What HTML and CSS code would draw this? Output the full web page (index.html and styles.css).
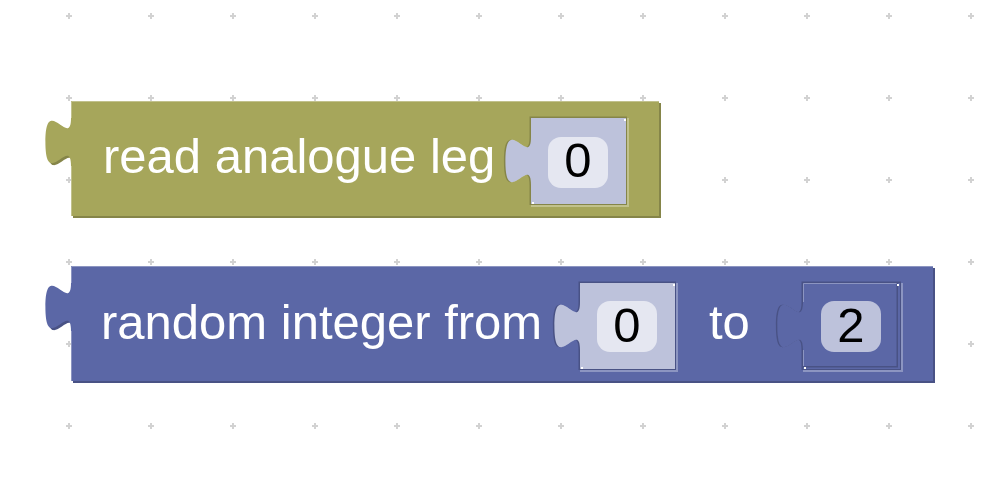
FILE: index.html
```html
<!DOCTYPE html>
<html lang="en">
<head>
<meta charset="utf-8">
<title>Blockly workspace</title>
<link rel="stylesheet" href="styles.css">
</head>
<body>
<div class="workspace">
  <svg class="canvas" width="1000" height="502" viewBox="0 0 1000 502" xmlns="http://www.w3.org/2000/svg">
    <defs>
      <pattern id="grid" patternUnits="userSpaceOnUse" x="66" y="13" width="82" height="82">
        <rect class="grid-plus" x="0" y="2" width="6" height="2"/>
        <rect class="grid-plus" x="2" y="0" width="2" height="6"/>
      </pattern>
    </defs>
    <rect class="grid-bg" x="0" y="0" width="1000" height="502"/>
    <rect x="0" y="0" width="1000" height="502" fill="url(#grid)"/>

    <!-- Block 1: read analogue leg -->
    <g class="block block-olive">
      <path class="blk-dark" transform="translate(2,2)" d="M 71,101 H 659 V 216 H 71 V 166 c 0,-32 -25.6,25.6 -25.6,-24 s 25.6,8 25.6,-24 V 101 Z"/>
      <path class="blk-main" d="M 71,101 H 659 V 216 H 71 V 166 c 0,-32 -25.6,25.6 -25.6,-24 s 25.6,8 25.6,-24 V 101 Z"/>
      <path class="blk-light-line" d="M 71.5,118 V 101.5 H 659 M 71.5,166 V 216"/>
      <text class="label" x="103" y="173">read analogue leg</text>

      <!-- input slot -->
      <path class="blk-light" d="M 531,118 H 629 V 207 H 531 V 185 c 0,-32 -25.6,25.6 -25.6,-24 s 25.6,8 25.6,-24 V 118 Z"/>
      <path class="blk-dark" d="M 529.5,116.5 H 627 V 205 H 529.5 V 185 c 0,-32 -25.6,25.6 -25.6,-24 s 25.6,8 25.6,-24 V 116.5 Z"/>
      <path class="shadow-main" d="M 531,118 H 626 V 204 H 531 V 185 c 0,-32 -25.6,25.6 -25.6,-24 s 25.6,8 25.6,-24 V 118 Z"/>
      <rect class="dot" x="624" y="119" width="2" height="2"/>
      <rect class="dot" x="532" y="202" width="2" height="2"/>
      <rect class="field-bg-shadow" x="548" y="137" width="60" height="51" rx="13" ry="13"/>
      <text class="field-text" x="578" y="177">0</text>
    </g>

    <!-- Block 2: random integer from .. to .. -->
    <g class="block block-blue">
      <path class="blk-dark" transform="translate(2,2)" d="M 71,266 H 933 V 381 H 71 V 331 c 0,-32 -25.6,25.6 -25.6,-24 s 25.6,8 25.6,-24 V 266 Z"/>
      <path class="blk-main" d="M 71,266 H 933 V 381 H 71 V 331 c 0,-32 -25.6,25.6 -25.6,-24 s 25.6,8 25.6,-24 V 266 Z"/>
      <path class="blk-light-line" d="M 71.5,283 V 266.5 H 933 M 71.5,331 V 381"/>
      <text class="label" x="101" y="339">random integer from</text>
      <text class="label" x="709" y="339">to</text>

      <!-- slot 1 (shadow) -->
      <path class="blk-light" d="M 580,283 H 678 V 372 H 580 V 350 c 0,-32 -25.6,25.6 -25.6,-24 s 25.6,8 25.6,-24 V 283 Z"/>
      <path class="blk-dark" d="M 578.5,281.5 H 676 V 370 H 578.5 V 350 c 0,-32 -25.6,25.6 -25.6,-24 s 25.6,8 25.6,-24 V 281.5 Z"/>
      <path class="shadow-main" d="M 580,283 H 675 V 369 H 580 V 350 c 0,-32 -25.6,25.6 -25.6,-24 s 25.6,8 25.6,-24 V 283 Z"/>
      <rect class="dot" x="673" y="284" width="2" height="2"/>
      <rect class="dot" x="581" y="367" width="2" height="2"/>
      <rect class="field-bg-shadow" x="597" y="301" width="60" height="51" rx="13" ry="13"/>
      <text class="field-text" x="627" y="342">0</text>

      <!-- slot 2 (real number block) -->
      <path class="blk-light" d="M 803,283 H 903 V 372 H 803 V 350 c 0,-32 -25.6,25.6 -25.6,-24 s 25.6,8 25.6,-24 V 283 Z"/>
      <path class="blk-dark" d="M 801.5,281.5 H 901 V 370 H 801.5 V 350 c 0,-32 -25.6,25.6 -25.6,-24 s 25.6,8 25.6,-24 V 281.5 Z"/>
      <path class="blk-main" d="M 803,283 H 900 V 369 H 803 V 350 c 0,-32 -25.6,25.6 -25.6,-24 s 25.6,8 25.6,-24 V 283 Z"/>
      <path class="blk-dark" d="M 803,283 H 898 V 367.5 H 803 V 350 c 0,-32 -25.6,25.6 -25.6,-24 s 25.6,8 25.6,-24 V 283 Z"/>
      <path class="blk-main" d="M 803,283 H 896.5 V 366 H 803 V 350 c 0,-32 -25.6,25.6 -25.6,-24 s 25.6,8 25.6,-24 V 283 Z"/>
      <path class="blk-light-line" d="M 803.5,302 V 283.5 H 896.5 M 803.5,350 V 366"/>
      <rect class="dot" x="897" y="284" width="2" height="2"/>
      <rect class="dot" x="804" y="367" width="2" height="2"/>
      <rect class="field-bg-block" x="821" y="301" width="60" height="51" rx="13" ry="13"/>
      <text class="field-text" x="851" y="342">2</text>
    </g>
  </svg>
</div>
</body>
</html>
```

FILE: styles.css
```css
html, body {
  margin: 0;
  padding: 0;
  background: #ffffff;
}

.workspace {
  width: 1000px;
  height: 502px;
  overflow: hidden;
  background: #ffffff;
}

.canvas {
  display: block;
}

.grid-bg {
  fill: #ffffff;
}

.grid-plus {
  fill: #d2d2d2;
}

.block-olive .blk-main { fill: #a6a65b; }
.block-olive .blk-dark { fill: #858549; }
.block-olive .blk-light { fill: #c1c18c; }
.block-olive .blk-light-line { fill: none; stroke: #c1c18c; stroke-width: 1; }

.block-blue .blk-main { fill: #5b67a6; }
.block-blue .blk-dark { fill: #495285; }
.block-blue .blk-light { fill: #8c95c1; }
.block-blue .blk-light-line { fill: none; stroke: #8c95c1; stroke-width: 1; }

.shadow-main {
  fill: #bdc2db;
}

.dot {
  fill: #ffffff;
}

.field-bg-shadow {
  fill: #e5e7f1;
}

.field-bg-block {
  fill: #bdc2db;
}

.label {
  font-family: "Liberation Sans", Arial, sans-serif;
  font-size: 49px;
  fill: #ffffff;
}

.field-text {
  font-family: "Liberation Sans", Arial, sans-serif;
  font-size: 49px;
  fill: #000000;
  text-anchor: middle;
}
```
